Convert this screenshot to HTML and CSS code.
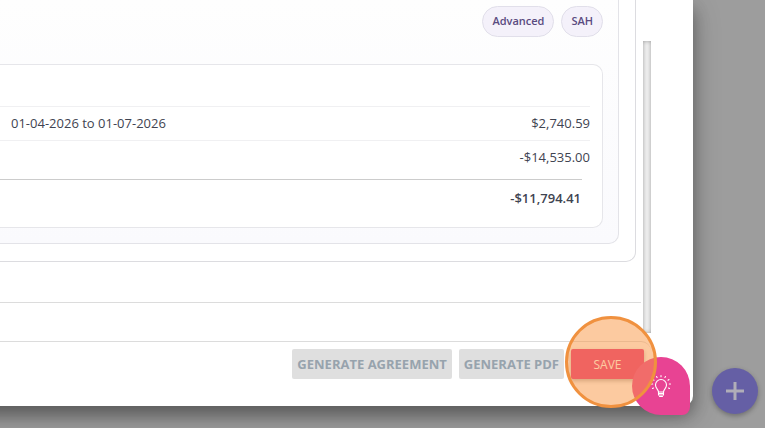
FILE: index.html
```
<!DOCTYPE html>
<html lang="en">

<head>
    <meta charset="UTF-8">
    <meta name="viewport" content="width=device-width, initial-scale=1.0">
    <title>Agreement</title>
    <link rel="stylesheet" href="styles.css">
</head>

<body>
    <main class="modal">

        <div class="modal-body">
            <div class="content">
                <section class="card">
                    <div class="panel">
                        <div class="tags">
                            <span class="tag">Advanced</span>
                            <span class="tag">SAH</span>
                        </div>

                        <div class="summary">
                            <div class="summary-head"></div>
                            <div class="row">
                                <span>01-04-2026 to 01-07-2026</span>
                                <span>$2,740.59</span>
                            </div>
                            <div class="row row-last">
                                <span>-$14,535.00</span>
                            </div>
                            <div class="total">
                                <strong>-$11,794.41</strong>
                            </div>
                        </div>
                    </div>
                </section>
                <hr class="divider">
            </div>
            <div class="scrollbar"></div>
        </div>

        <footer class="actions">
            <button class="btn" type="button" disabled>GENERATE AGREEMENT</button>
            <button class="btn" type="button" disabled>GENERATE PDF</button>
            <button class="btn btn-save" type="button">SAVE</button>
        </footer>

    </main>

    <button class="fab" type="button" aria-label="Add">
        <svg width="20" height="20" viewBox="0 0 20 20" fill="none" stroke="currentColor" stroke-width="3">
            <path d="M10 1v18M1 10h18" />
        </svg>
    </button>

    <button class="hint" type="button" aria-label="Tips">
        <svg width="22" height="24" viewBox="0 0 22 24" fill="none" stroke="currentColor" stroke-width="1.1" stroke-linecap="round">
            <path d="M8.500 18c0-2.500-3-3.500-3-7a5.500 5.500 0 0 1 11 0c0 3.500-3 4.500-3 7z" />
            <path d="M8.500 18v3h5v-3M8.500 19.500h5M9.500 22.500h3" />
            <path d="M11 1.500v1.200M6.500 2.500l.6 1M15.500 2.500l-.6 1M3 5.500l1 .7M19 5.500l-1 .7M1.500 10h1.200M20.500 10h-1.200M2.500 14.500l1-.5M19.500 14.500l-1-.5" />
        </svg>
    </button>

    <div class="marker"></div>
</body>

</html>
```
FILE: styles.css
```
* {
    margin: 0;
    padding: 0;
    box-sizing: border-box;
}

body {
    min-height: 100vh;
    padding-right: 72px;
    overflow: hidden;
    background-color: #9d9d9d;
    font-family: "Open Sans", "Noto Sans", sans-serif;
    font-size: 13px;
    line-height: 18px;
    color: #3f4451;
}

/* the modal runs on past the left edge */
.modal {
    margin-left: -40px;
    padding-left: 40px;
    background-color: #fff;
    border-bottom-right-radius: 10px;
    box-shadow: 0 10px 16px rgba(0, 0, 0, 0.3), 0 8px 30px rgba(0, 0, 0, 0.2);
}

.modal-body {
    display: flex;
    gap: 2px;
    padding-right: 42px;
}

.content {
    flex: 1;
}

.card {
    margin-right: 5px;
    padding: 0 16px 17px 0;
    border: 1px solid #dcdce0;
    border-width: 0 1px 1px 0;
    border-bottom-right-radius: 10px;
}

.panel {
    padding: 6px 15px 15px 0;
    border: 1px solid #e3e3e8;
    border-width: 0 1px 1px 0;
    border-bottom-right-radius: 10px;
    background: linear-gradient(#fefefe, #fafafd);
}

.tags {
    display: flex;
    justify-content: flex-end;
    gap: 7px;
    margin-bottom: 27px;
}

.tag {
    padding: 5px 9px 6px;
    border: 1px solid #e1dfea;
    border-radius: 16px;
    background-color: #f4f1fa;
    color: #5a4b80;
    font-size: 11px;
    font-weight: 600;
}

.summary {
    padding: 0 12px 20px 11px;
    border: 1px solid #e6e6ea;
    border-left: none;
    border-radius: 0 10px 10px 0;
    background-color: #fff;
}

/* the rules run on under the left edge */
.summary-head,
.row,
.total {
    margin-left: -11px;
    padding-left: 11px;
}

.summary-head {
    height: 42px;
    border-bottom: 1px solid #f0f0f2;
}

.row {
    display: flex;
    justify-content: space-between;
    padding-top: 7px;
    padding-bottom: 8px;
    border-bottom: 1px solid #f0f0f2;
}

.row-last {
    justify-content: flex-end;
    padding-bottom: 13px;
    border-bottom: none;
}

.total {
    margin-right: 8px;
    padding-top: 9px;
    padding-right: 1px;
    border-top: 1px solid #ccc;
    text-align: right;
}

.total strong {
    font-weight: 600;
}

.divider {
    margin: 40px 0 38px;
    border: none;
    border-top: 1px solid #dcdcdc;
}

.scrollbar {
    width: 8px;
    margin: 41px 0 8px;
    background-color: #f0f0f0;
    box-shadow: inset 0 0 4px rgba(0, 0, 0, 0.35);
}

.actions {
    display: flex;
    justify-content: flex-end;
    gap: 7px;
    margin-right: 42px;
    padding: 7px 7px 27px 0;
    border-top: 1px solid #dcdcdc;
    border-top-right-radius: 10px;
}

.btn {
    height: 30px;
    padding: 0 5px;
    border: none;
    border-radius: 2px;
    background-color: #dfdfdf;
    color: #97a3ad;
    font-family: inherit;
    font-size: 13px;
    font-weight: 700;
}

.btn-save {
    width: 73px;
    background-color: #e7337f;
    color: #fff;
    font-size: 12px;
    font-weight: 400;
    box-shadow: 0 2px 4px rgba(0, 0, 0, 0.3);
    cursor: pointer;
}

.fab,
.hint {
    position: fixed;
    display: flex;
    align-items: center;
    justify-content: center;
    border: none;
    cursor: pointer;
}

.fab {
    right: 7px;
    bottom: 14px;
    width: 46px;
    height: 46px;
    border-radius: 50%;
    background-color: #655fa5;
    color: #b0aeb8;
    box-shadow: 0 2px 5px rgba(0, 0, 0, 0.3);
}

.hint {
    right: 75px;
    bottom: 13px;
    width: 58px;
    height: 58px;
    border-radius: 50% 50% 8px 50%;
    background-color: #e84393;
    color: #fff;
}

.marker {
    position: fixed;
    right: 108px;
    bottom: 20px;
    width: 92px;
    height: 92px;
    border: 3px solid #f0913f;
    border-radius: 50%;
    background-color: rgba(249, 149, 65, 0.5);
    pointer-events: none;
}
```
